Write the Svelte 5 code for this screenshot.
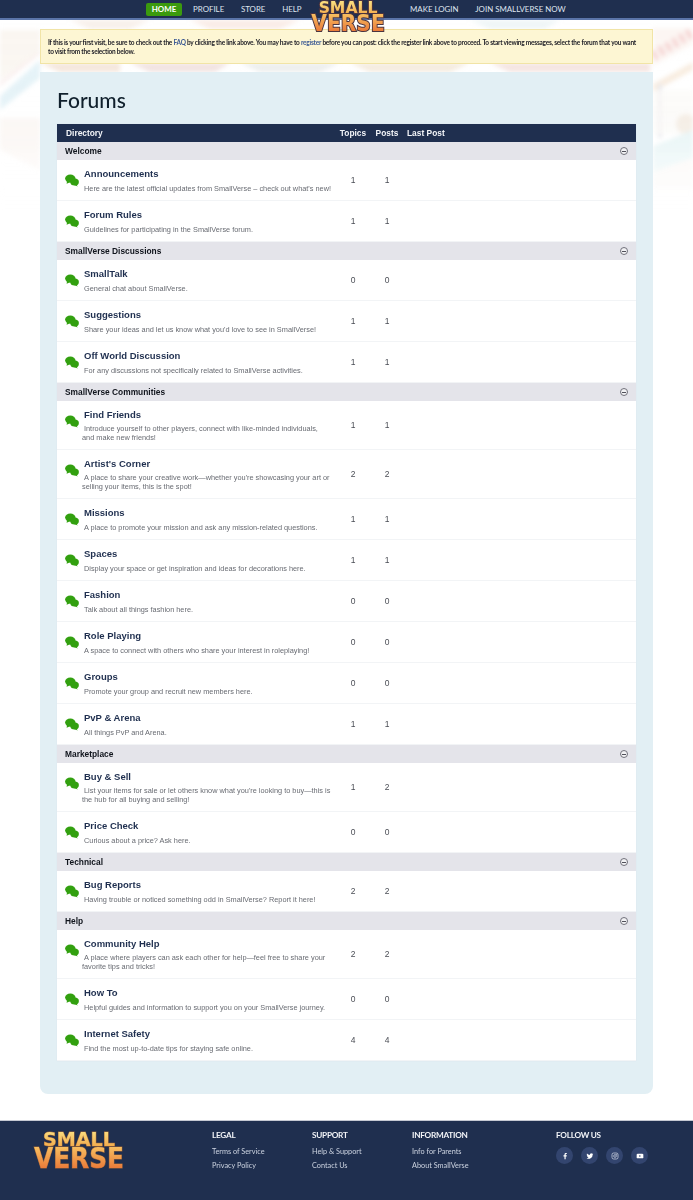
<script>
  const nav = ["Profile", "Store", "Help"];
  const navRight = ["Make Login", "Join SmallVerse Now"];

  const sections = [
    { name: "Welcome", forums: [
      { title: "Announcements", desc: "Here are the latest official updates from SmallVerse – check out what's new!", topics: 1, posts: 1 },
      { title: "Forum Rules", desc: "Guidelines for participating in the SmallVerse forum.", topics: 1, posts: 1 },
    ]},
    { name: "SmallVerse Discussions", forums: [
      { title: "SmallTalk", desc: "General chat about SmallVerse.", topics: 0, posts: 0 },
      { title: "Suggestions", desc: "Share your ideas and let us know what you'd love to see in SmallVerse!", topics: 1, posts: 1 },
      { title: "Off World Discussion", desc: "For any discussions not specifically related to SmallVerse activities.", topics: 1, posts: 1 },
    ]},
    { name: "SmallVerse Communities", forums: [
      { title: "Find Friends", desc: "Introduce yourself to other players, connect with like-minded individuals, and make new friends!", topics: 1, posts: 1, tall: true },
      { title: "Artist's Corner", desc: "A place to share your creative work—whether you're showcasing your art or selling your items, this is the spot!", topics: 2, posts: 2, tall: true },
      { title: "Missions", desc: "A place to promote your mission and ask any mission-related questions.", topics: 1, posts: 1 },
      { title: "Spaces", desc: "Display your space or get inspiration and ideas for decorations here.", topics: 1, posts: 1 },
      { title: "Fashion", desc: "Talk about all things fashion here.", topics: 0, posts: 0 },
      { title: "Role Playing", desc: "A space to connect with others who share your interest in roleplaying!", topics: 0, posts: 0 },
      { title: "Groups", desc: "Promote your group and recruit new members here.", topics: 0, posts: 0 },
      { title: "PvP & Arena", desc: "All things PvP and Arena.", topics: 1, posts: 1 },
    ]},
    { name: "Marketplace", forums: [
      { title: "Buy & Sell", desc: "List your items for sale or let others know what you're looking to buy—this is the hub for all buying and selling!", topics: 1, posts: 2, tall: true },
      { title: "Price Check", desc: "Curious about a price? Ask here.", topics: 0, posts: 0 },
    ]},
    { name: "Technical", forums: [
      { title: "Bug Reports", desc: "Having trouble or noticed something odd in SmallVerse? Report it here!", topics: 2, posts: 2 },
    ]},
    { name: "Help", forums: [
      { title: "Community Help", desc: "A place where players can ask each other for help—feel free to share your favorite tips and tricks!", topics: 2, posts: 2, tall: true },
      { title: "How To", desc: "Helpful guides and information to support you on your SmallVerse journey.", topics: 0, posts: 0 },
      { title: "Internet Safety", desc: "Find the most up-to-date tips for staying safe online.", topics: 4, posts: 4 },
    ]},
  ];

  const footerCols = [
    { head: "Legal", links: ["Terms of Service", "Privacy Policy"], cls: "legal" },
    { head: "Support", links: ["Help & Support", "Contact Us"], cls: "support" },
    { head: "Information", links: ["Info for Parents", "About SmallVerse"], cls: "info" },
  ];
</script>

{#snippet logo(cls)}
  <svg class="logo {cls}" viewBox="0 0 92 38" aria-label="SmallVerse">
    <defs>
      <linearGradient id="grad-{cls}-a" x1="0" x2="0" y1="0" y2="1">
        <stop offset="0" stop-color="#fde88a" />
        <stop offset="1" stop-color="#f0a040" />
      </linearGradient>
      <linearGradient id="grad-{cls}-b" x1="0" x2="0" y1="0" y2="1">
        <stop offset="0" stop-color="#fbd06a" />
        <stop offset="1" stop-color="#e5672e" />
      </linearGradient>
    </defs>
    <text x="10" y="15" textLength="72" lengthAdjust="spacingAndGlyphs" fill="url(#grad-{cls}-a)">SMALL</text>
    <text class="big" x="1" y="36.500" textLength="90" lengthAdjust="spacingAndGlyphs" fill="url(#grad-{cls}-b)">VERSE</text>
  </svg>
{/snippet}

{#snippet bubbles()}
  <svg class="bubbles" viewBox="0 0 14 13" aria-hidden="true">
    <ellipse cx="5.300" cy="4.600" rx="5.200" ry="4.200" fill="#32a00f" />
    <path d="M2 7.400 L1.600 9.800 L4.600 8.400 Z" fill="#32a00f" />
    <ellipse cx="9.600" cy="8" rx="4.300" ry="3.600" fill="#32a00f" />
    <path d="M11.400 10.400 L12.800 12.400 L9 11 Z" fill="#32a00f" />
  </svg>
{/snippet}

<div class="page">
  <svg class="scenery" viewBox="0 0 693 240" aria-hidden="true">
    <defs>
      <linearGradient id="fade" x1="0" x2="0" y1="0" y2="1">
        <stop offset="0" stop-color="#fff" stop-opacity="0" />
        <stop offset=".55" stop-color="#fff" stop-opacity=".1" />
        <stop offset=".9" stop-color="#fff" stop-opacity="1" />
      </linearGradient>
    </defs>
    <g opacity=".65">
      <!-- left side -->
      <path d="M0 96 L40 60 V78 L0 110 Z" fill="#d6ebf3" />
      <path d="M0 84 L40 52" stroke="#eec9c6" stroke-width="3" stroke-dasharray="2 2" fill="none" />
      <path d="M0 30 H40 V52 L0 80 Z" fill="#f8f1ea" />
      <path d="M0 118 H40 V170 L0 150 Z" fill="#f9f3ee" />
      <!-- strip above notice -->
      <path d="M70 20 H150 L130 29 H90 Z" fill="#f4e8e0" />
      <path d="M190 20 H300 L280 29 H210 Z" fill="#f7e2da" />
      <path d="M470 20 H560 L545 29 H490 Z" fill="#e6f1f3" />
      <!-- strip between notice and panel -->
      <path d="M40 63 H120 V72 H60 Z" fill="#efd9c8" />
      <path d="M130 63 H230 L215 72 H150 Z" fill="#e9d2d0" />
      <path d="M240 63 H340 L320 72 H260 Z" fill="#e2e5e4" />
      <path d="M350 63 H470 L450 72 H370 Z" fill="#efe0cd" />
      <path d="M490 63 H650 V72 H510 Z" fill="#eed5cf" />
      <!-- right side -->
      <path d="M653 28 H693 V44 L653 66 Z" fill="#faf2ec" />
      <path d="M653 56 L693 32" stroke="#f0b9b6" stroke-width="10" stroke-dasharray="4 4" fill="none" />
      <path d="M653 84 L693 62 V70 L653 92 Z" fill="#f4e2ce" />
      <rect x="658" y="84" width="4" height="54" fill="#dcdde4" />
      <rect x="653" y="90" width="40" height="44" fill="#faf6f2" opacity=".7" />
      <circle cx="686" cy="124" r="10" fill="#efe3d6" />
      <path d="M653 146 L693 130 V158 L653 172 Z" fill="#dcf0f1" />
      <path d="M653 172 L693 158 V190 H653 Z" fill="#f9f5f1" />
    </g>
    <rect x="0" y="0" width="693" height="240" fill="url(#fade)" />
  </svg>

  <header class="topbar">
    <nav>
      <a class="nav-link home" href="#home">Home</a>
      {#each nav as item}
        <a class="nav-link" href="#{item}">{item}</a>
      {/each}
      <span class="logo-slot">{@render logo("head")}</span>
      {#each navRight as item}
        <a class="nav-link" href="#{item}">{item}</a>
      {/each}
    </nav>
  </header>

  <main>
    <div class="notice">
      If this is your first visit, be sure to check out the <a href="#faq">FAQ</a> by clicking the link above. You may have to <a href="#register">register</a> before you can post: click the register link above to proceed. To start viewing messages, select the forum that you want to visit from the selection below.
    </div>

    <section class="panel">
      <h1>Forums</h1>
      <div class="board">
        <div class="row head-row">
          <div class="dir">Directory</div>
          <div class="num">Topics</div>
          <div class="num">Posts</div>
          <div class="last">Last Post</div>
        </div>
        {#each sections as section}
          <div class="cat">
            <span>{section.name}</span>
            <span class="toggle"></span>
          </div>
          {#each section.forums as forum}
            <div class="row forum" class:tall={forum.tall}>
              <div class="icon">{@render bubbles()}</div>
              <div class="info">
                <a class="title" href="#forum">{forum.title}</a>
                <p class="desc">{forum.desc}</p>
              </div>
              <div class="num val">{forum.topics}</div>
              <div class="num val">{forum.posts}</div>
              <div class="last"></div>
            </div>
          {/each}
        {/each}
      </div>
    </section>
  </main>

  <footer>
    <div class="foot-logo">{@render logo("foot")}</div>
    {#each footerCols as col}
      <div class="col {col.cls}">
        <h4>{col.head}</h4>
        {#each col.links as link}
          <a href="#foot">{link}</a>
        {/each}
      </div>
    {/each}
    <div class="col follow">
      <h4>Follow Us</h4>
      <div class="socials">
        <span class="social">
          <svg viewBox="0 0 12 12"><path d="M7 11V6.600h1.500l.2-1.700H7V3.800c0-.5.2-.8.8-.8h.9V1.500C8.500 1.500 8 1.400 7.400 1.400 6 1.400 5.200 2.200 5.200 3.600v1.300H3.700v1.700h1.500V11z" fill="#fff" /></svg>
        </span>
        <span class="social">
          <svg viewBox="0 0 12 12"><path d="M11 3c-.4.2-.8.300-1.200.300.4-.3.8-.7.900-1.200-.4.200-.9.400-1.300.5a2.100 2.100 0 0 0-3.600 1.900C4 4.400 2.500 3.600 1.500 2.300c-.6 1-.3 2.200.6 2.800-.3 0-.7-.1-.9-.3 0 1 .7 1.900 1.700 2.100-.3.100-.6.100-.9 0 .3.800 1 1.400 1.900 1.400A4.200 4.200 0 0 1 .8 9.200 6 6 0 0 0 10 4c.4-.3.800-.6 1-1z" fill="#fff" /></svg>
        </span>
        <span class="social">
          <svg viewBox="0 0 12 12" fill="none" stroke="#dfe4ee" stroke-width="1"><rect x="1.500" y="1.500" width="9" height="9" rx="2.500" /><circle cx="6" cy="6" r="2" /><circle cx="8.500" cy="3.500" r=".3" fill="#fff" /></svg>
        </span>
        <span class="social">
          <svg viewBox="0 0 12 12"><rect x="1" y="2.500" width="10" height="7" rx="1.800" fill="#fff" /><path d="M5 4.500 7.500 6 5 7.500z" fill="#33456f" /></svg>
        </span>
      </div>
    </div>
  </footer>
</div>

<style>
  :global(body) {
    margin: 0;
    background: #fff;
    font-family: "Liberation Sans", Arial, sans-serif;
  }

  a {
    text-decoration: none;
  }

  .page {
    position: relative;
    width: 693px;
    height: 1200px;
    overflow: hidden;
    display: flex;
    flex-direction: column;
    opacity: .999;
  }

  .scenery {
    position: absolute;
    top: 0;
    left: 0;
    width: 693px;
    height: 240px;
    filter: blur(2px);
  }

  .topbar {
    position: relative;
    z-index: 2;
    height: 18px;
    background: #1f2f4f;
    border-bottom: 2px solid #5a74a8;
    flex: none;
  }

  nav {
    display: flex;
    align-items: center;
    height: 18px;
    padding-left: 146px;
  }

  .nav-link {
    font-family: Lato, sans-serif;
    font-size: 7.900px;
    text-transform: uppercase;
    color: #dfe5f0;
    margin-right: 16.700px;
    white-space: nowrap;
  }

  .nav-link.home {
    width: 36px;
    height: 13px;
    line-height: 13px;
    text-align: center;
    background: #3b9a0e;
    border-radius: 2px;
    color: #fff;
    font-weight: 700;
    margin-right: 11px;
  }

  .nav-link:nth-child(4) {
    margin-right: 8px;
  }

  .logo-slot {
    width: 76px;
    height: 18px;
    margin-right: 24.500px;
    position: relative;
  }

  .logo {
    display: block;
    overflow: visible;
  }

  .logo text {
    font-family: "DejaVu Sans", sans-serif;
    font-weight: 700;
    font-size: 19px;
    paint-order: stroke;
  }

  .logo text.big {
    font-size: 28px;
  }

  .logo.head {
    position: absolute;
    top: 1px;
    left: 0;
    width: 76px;
    height: 31px;
  }

  .logo.head text {
    stroke: #4a3440;
    stroke-width: 2.600px;
  }

  .logo.foot {
    width: 94px;
    height: 38px;
  }

  .logo.foot text {
    stroke: #9a6238;
    stroke-width: 1px;
  }

  main {
    position: relative;
    z-index: 1;
    flex: none;
    height: 1100px;
    padding: 9px 40px 0;
    box-sizing: border-box;
  }

  .notice {
    height: 35px;
    box-sizing: border-box;
    padding: 8px 13px 0 7px;
    background: #fdf6d3;
    border: 1px solid #f1e4a6;
    font-family: Lato, sans-serif;
    font-size: 6.500px;
    letter-spacing: -.23px;
    font-weight: 700;
    line-height: 9px;
    color: #1c1c24;
  }

  .notice a {
    color: #3c5a94;
  }

  .panel {
    margin-top: 8px;
    height: 1022px;
    box-sizing: border-box;
    background: #e2eff4;
    border-radius: 0 0 8px 8px;
    padding: 14px 17px 0;
  }

  h1 {
    margin: 0;
    height: 38px;
    font-family: Lato, sans-serif;
    font-weight: 500;
    font-size: 21px;
    line-height: 28px;
    color: #10202c;
  }

  .board {
    background: #fff;
    box-shadow: 0 0 1px #d6e2e8;
  }

  .row {
    display: grid;
    grid-template-columns: 27px 252px 34px 34px 1fr;
    align-items: center;
  }

  .head-row {
    grid-template-columns: 279px 34px 34px 1fr;
    height: 18px;
    background: #1f2f4f;
    color: #f2f4f8;
    font-size: 8.400px;
    font-weight: 700;
  }

  .dir {
    padding-left: 9px;
  }

  .num {
    text-align: center;
  }

  .last {
    padding-left: 3px;
  }

  .cat {
    height: 18px;
    background: #e4e4ea;
    display: flex;
    align-items: center;
    justify-content: space-between;
    padding: 0 8px;
    font-size: 8.400px;
    font-weight: 700;
    color: #10141c;
  }

  .toggle {
    position: relative;
    width: 6px;
    height: 6px;
    border: 1px solid #70707a;
    border-radius: 50%;
    background: #f2f2f4;
  }

  .toggle::after {
    content: "";
    position: absolute;
    left: 1px;
    top: 2.500px;
    width: 4px;
    height: 1px;
    background: #50505a;
  }

  .forum {
    height: 41px;
    border-bottom: 1px solid #f2f4f6;
    box-sizing: border-box;
  }

  .forum.tall {
    height: 49px;
  }

  .icon {
    padding-left: 8px;
    padding-top: 1px;
  }

  .tall .icon {
    padding-bottom: 7px;
    padding-top: 0;
  }

  .bubbles {
    display: block;
    width: 14px;
    height: 13px;
  }

  .title {
    display: block;
    font-size: 9.500px;
    font-weight: 700;
    line-height: 13px;
    color: #1f2f4f;
  }

  .desc {
    margin: 4px 3.500px 0 0;
    font-size: 7.350px;
    line-height: 9.500px;
    color: #686b72;
  }

  .tall .desc {
    margin: 3px 5px 0 -2px;
    text-indent: 2px;
  }

  .val {
    font-size: 8.500px;
    color: #4a4d55;
  }

  footer {
    position: relative;
    z-index: 1;
    flex: 1;
    display: flex;
    background: #1f2f4f;
    border-top: 1px solid #c5c9d2;
    font-family: Lato, sans-serif;
  }

  .foot-logo {
    width: 180px;
    padding: 10px 0 0 32px;
    box-sizing: border-box;
  }

  .col {
    padding-top: 9px;
    display: flex;
    flex-direction: column;
  }

  .col.legal {
    width: 100px;
    margin-left: 32px;
  }

  .col.support {
    width: 100px;
  }

  .col.info {
    width: 144px;
  }

  h4 {
    margin: 0 0 4px;
    height: 11px;
    font-size: 8.200px;
    letter-spacing: -.25px;
    line-height: 11px;
    font-weight: 700;
    text-transform: uppercase;
    color: #f2f4f8;
  }

  .col a {
    font-size: 7.300px;
    line-height: 14px;
    color: #ccd3e0;
  }

  .socials {
    display: flex;
    gap: 8px;
    margin-top: 2px;
  }

  .social {
    width: 17px;
    height: 17px;
    border-radius: 50%;
    background: #33456f;
    display: flex;
    align-items: center;
    justify-content: center;
  }

  .social svg {
    width: 8px;
    height: 8px;
  }
</style>
